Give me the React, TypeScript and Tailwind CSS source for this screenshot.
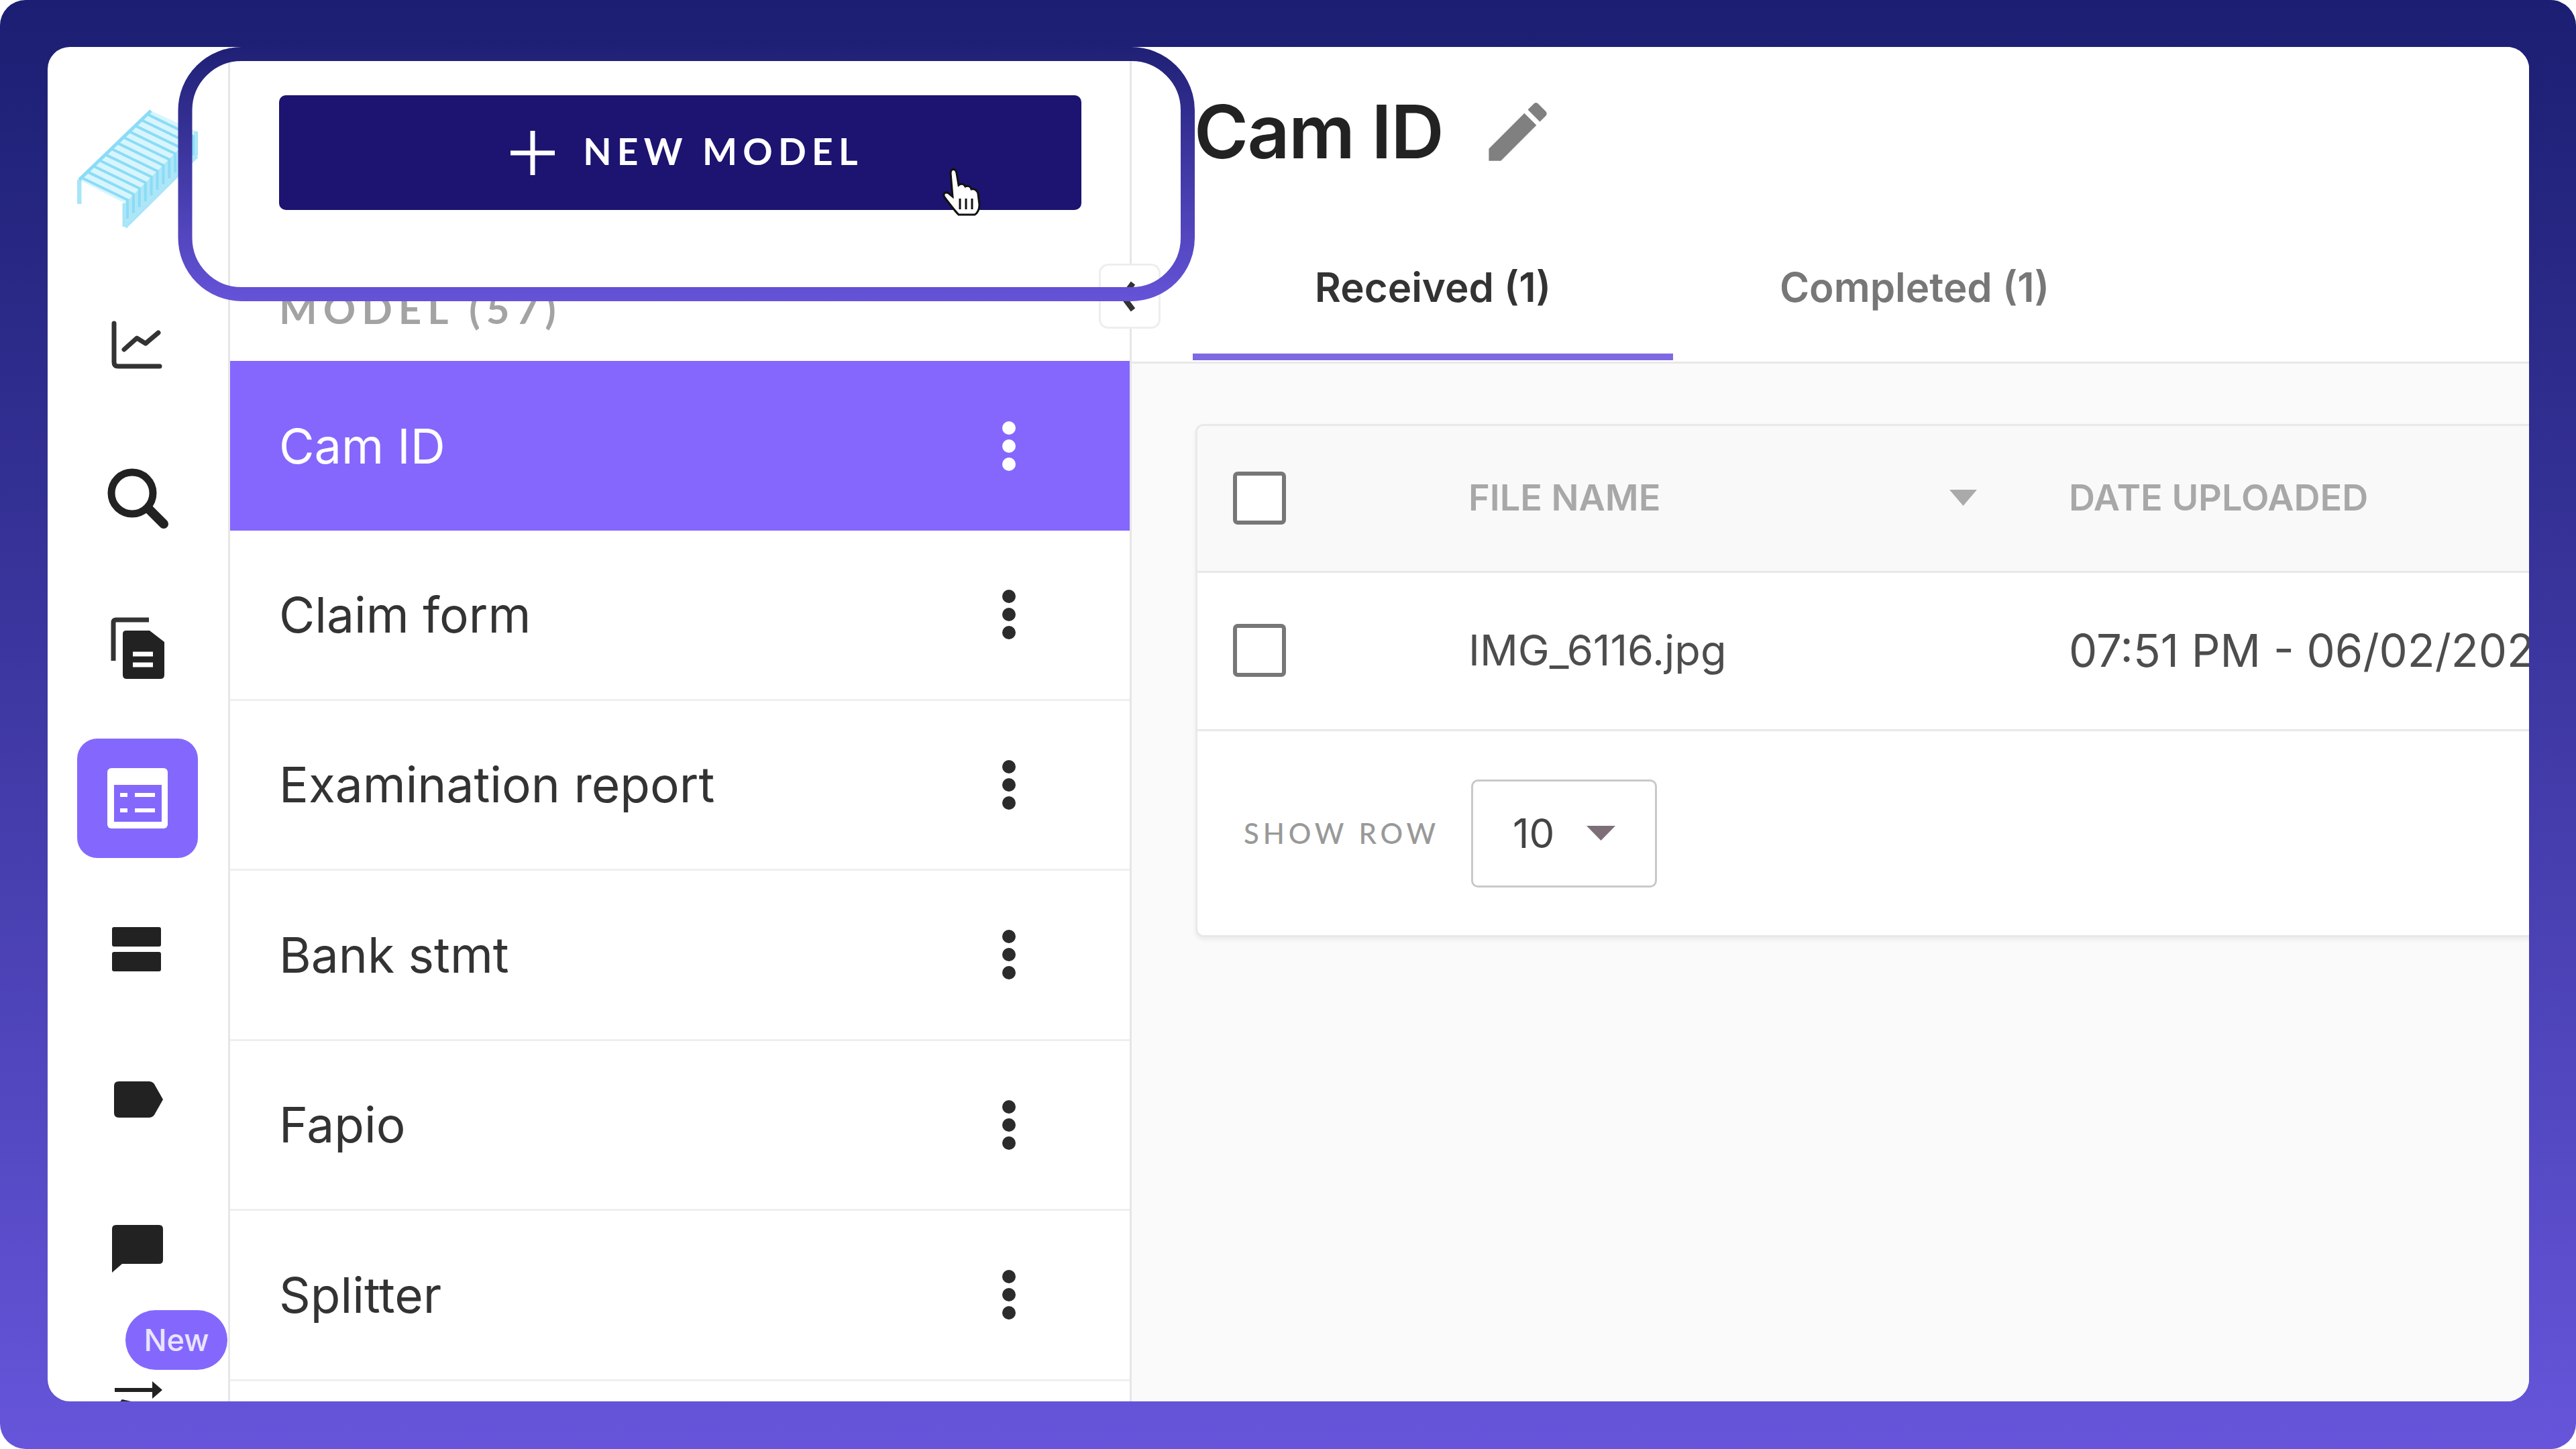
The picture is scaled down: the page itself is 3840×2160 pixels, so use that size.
const Kebab = ({ light }: { light?: boolean }) => (
  <div className="flex flex-col gap-[7px]">
    {[0, 1, 2].map((i) => (
      <span key={i} className={`w-[20px] h-[20px] rounded-full ${light ? "bg-white" : "bg-[#2b2b2b]"}`} />
    ))}
  </div>
);

const RailIcon = ({ cy, className, children }: { cy: number; className: string; children: React.ReactNode }) => (
  <svg viewBox={`115 ${cy - 90} 180 180`} className={`w-[180px] h-[180px] shrink-0 ${className}`}>
    {children}
  </svg>
);

const slats = Array.from({ length: 12 }, (_, i) => i);

const rows = ["Claim form", "Examination report", "Bank stmt", "Fapio", "Splitter"];

const Checkbox = () => <span className="w-[79px] h-[79px] border-[6px] border-[#777777] rounded-[7px] bg-white shrink-0" />;

export default function App() {
  return (
    <div className="relative w-[3840px] h-[2160px] bg-white overflow-hidden font-['Inter',sans-serif]">
      <div className="w-full h-full rounded-[38px] bg-gradient-to-b from-[#1b1e72] to-[#6655da] pt-[70px] pl-[71px] pr-[70px] pb-[71px]">
        <div className="relative flex w-full h-full rounded-[33px] bg-white overflow-hidden">
          {/* Rail */}
          <div className="relative w-[272px] h-full shrink-0 flex flex-col items-start pl-[44px] pt-[91px] border-r-[3px] border-[#e6e6e6] overflow-hidden">
            <RailIcon cy={251} className="">
              <g stroke="#8bdcf6" fill="none">
                <path d="M118 268 L225 165 L293 196 L186 303 Z" fill="#d8f5fd" stroke="none" />
                <path d="M118 268 V304 M186 303 V338 M293 196 V232 M186 338 L293 232" strokeWidth="7" opacity="0.75" />
                <path d="M186 303 L293 196 L293 232 L186 338 Z" fill="#aee6f8" stroke="none" />
                <path d="M118 268 L225 165" strokeWidth="5" />
                {slats.map((i) => (
                  <path key={i} d={`M${122 + i * 8.9} ${265 - i * 8.6} L${190 + i * 8.9} ${298 - i * 8.6} V${326 - i * 8.6}`} strokeWidth="4" />
                ))}
              </g>
            </RailIcon>
            <RailIcon cy={515} className="mt-[84px]">
              <g fill="none" stroke="#333333" strokeWidth="7" strokeLinecap="round" strokeLinejoin="round">
                <path d="M170 482 V540 Q170 546 176 546 H238" />
                <path d="M185 521 L204 504 L217 512 L236 496" />
              </g>
            </RailIcon>
            <RailIcon cy={743} className="mt-[48px]">
              <g fill="none" stroke="#222222" strokeLinecap="round">
                <circle cx="197" cy="735" r="31" strokeWidth="11" />
                <path d="M221 758 L244 781" strokeWidth="14" />
              </g>
            </RailIcon>
            <RailIcon cy={966} className="mt-[43px]">
              <path d="M169 985 V928 Q169 924 173 924 H222" fill="none" stroke="#333333" strokeWidth="7" />
              <path d="M188 940 H223 L245 957 V1006 Q245 1012 239 1012 H189 Q183 1012 183 1006 V945 Q183 940 188 940 Z" fill="#222222" />
              <path d="M198 975 H228 M198 991 H228" stroke="#ffffff" strokeWidth="7" />
            </RailIcon>
            <div className="mt-[45px] w-[180px] h-[178px] shrink-0 rounded-[30px] bg-[#8468fd] flex items-center justify-center">
              <svg viewBox="160 1146 90 90" className="w-[90px] h-[90px]">
                <rect x="160" y="1146" width="90" height="90" rx="6" fill="#ffffff" />
                <rect x="170" y="1171" width="71" height="55" fill="#8468fd" />
                <path d="M179 1186 H190 M179 1209 H190 M201 1186 H231 M201 1209 H231" stroke="#ffffff" strokeWidth="6" />
              </svg>
            </div>
            <RailIcon cy={1415} className="mt-[45px]">
              <rect x="167" y="1383" width="73" height="29" rx="3" fill="#222222" />
              <rect x="167" y="1420" width="73" height="29" rx="3" fill="#222222" />
            </RailIcon>
            <RailIcon cy={1639} className="mt-[44px]">
              <path d="M177 1613 H222 Q227 1613 230 1617 L243 1640 L230 1663 Q227 1667 222 1667 H177 Q170 1667 170 1660 V1620 Q170 1613 177 1613 Z" fill="#222222" />
            </RailIcon>
            <RailIcon cy={1862} className="mt-[43px]">
              <path d="M173 1827 H237 Q243 1827 243 1833 V1879 Q243 1885 237 1885 H182 L167 1898 V1833 Q167 1827 173 1827 Z" fill="#222222" />
            </RailIcon>
            <svg viewBox="115 1952 180 160" className="w-[180px] h-[160px] shrink-0">
              <path d="M171 2073 H228" stroke="#222222" strokeWidth="6" />
              <path d="M227 2060 L242 2073 L227 2086 Z" fill="#222222" />
              <path d="M182 2087 L170 2100 H240" fill="#222222" />
            </svg>
          </div>

          {/* Model list */}
          <div className="w-[1344px] h-full shrink-0 flex flex-col border-r-[3px] border-[#e6e6e6] overflow-hidden bg-white">
            <div className="h-[468px] shrink-0 pl-[73px] pt-[72px]">
              <button className="w-[1196px] h-[171px] rounded-[10px] bg-[#1c1470] text-white flex items-center justify-center gap-[42px] pl-[20px]">
                <svg viewBox="0 0 66 66" className="w-[66px] h-[66px]">
                  <path d="M33 0 V66 M0 33 H66" stroke="#ffffff" strokeWidth="7" />
                </svg>
                <span className="text-[55px] font-bold tracking-[0.15em] leading-none font-['Lato',sans-serif] pb-[4px]">NEW MODEL</span>
              </button>
              <div className="mt-[117px] text-[60px] font-bold tracking-[0.15em] leading-none text-[#a3a3a3] font-['Lato',sans-serif]">MODEL (57)</div>
            </div>
            <div className="h-[253px] shrink-0 bg-[#8567fd] flex items-center justify-between pl-[73px] pr-[170px] text-white text-[72px] leading-none">
              <span>Cam ID</span>
              <Kebab light />
            </div>
            {rows.map((r) => (
              <div key={r} className="h-[253.5px] shrink-0 flex items-center justify-between pl-[73px] pr-[170px] border-b-[3px] border-[#efefef] text-[#333333] text-[73px] leading-none">
                <span>{r}</span>
                <Kebab />
              </div>
            ))}
          </div>

          {/* Main */}
          <div className="flex-1 min-w-0 h-full flex flex-col bg-[#fafafa] overflow-hidden">
            <div className="h-[472px] shrink-0 bg-white border-b-[3px] border-[#e8e8e8] flex flex-col">
              <div className="mt-[71px] pl-[93px] flex items-center h-[110px]">
                <h1 className="text-[110px] font-semibold leading-none text-[#222222] tracking-[-0.015em]">Cam ID</h1>
                <svg viewBox="0 0 24 24" className="ml-[54px] w-[115px] h-[115px] fill-[#808080]">
                  <path d="M3 17.25V21h3.75L17.81 9.94l-3.75-3.75L3 17.25zM20.71 7.04c.39-.39.39-1.02 0-1.41l-2.34-2.34c-.39-.39-1.02-.39-1.41 0l-1.83 1.83 3.75 3.75 1.83-1.83z" />
                </svg>
              </div>
              <div className="mt-[69px] ml-[91px] flex h-[217px] text-[60px] font-semibold leading-none">
                <div className="w-[716px] h-full border-b-[10px] border-[#7f69e2] text-[#333333] flex items-center justify-center pt-[9px]">Received (1)</div>
                <div className="w-[720px] h-full border-b-[10px] border-transparent text-[#777777] flex items-center justify-center pt-[9px]">Completed (1)</div>
              </div>
            </div>
            <div className="mt-[90px] ml-[95px] w-[2400px] h-[765px] shrink-0 bg-white border-[3px] border-[#e9e9e9] rounded-[12px] shadow-[0_4px_6px_rgba(0,0,0,0.06)] flex flex-col">
              <div className="h-[219px] shrink-0 bg-[#f9f9f9] rounded-t-[10px] border-b-[3px] border-[#e8e8e8] flex items-center pl-[53px] text-[54px] font-semibold text-[#a8a8a8] leading-none pb-[2px]">
                <Checkbox />
                <span className="ml-[272px] w-[758px] flex items-center justify-between">
                  <span>FILE NAME</span>
                  <svg viewBox="0 0 41 24" className="w-[41px] h-[24px] fill-[#aaaaaa]"><path d="M0 0 H41 L20.5 24 Z" /></svg>
                </span>
                <span className="ml-[137px]">DATE UPLOADED</span>
              </div>
              <div className="h-[236px] shrink-0 border-b-[3px] border-[#e8e8e8] flex items-center pl-[53px] text-[#4d4d4d] leading-none whitespace-nowrap pb-[3px]">
                <Checkbox />
                <span className="ml-[272px] w-[717px] text-[63px]">IMG_6116.jpg</span>
                <span className="ml-[178px] text-[67px]">07:51 PM - 06/02/2023</span>
              </div>
              <div className="flex-1 flex items-center pl-[69px]">
                <span className="text-[42px] font-medium tracking-[0.14em] text-[#999999] leading-none font-['Lato',sans-serif] w-[339px] whitespace-nowrap">SHOW ROW</span>
                <div className="w-[277px] h-[161px] border-[3px] border-[#c9c9c9] rounded-[10px] flex items-center pl-[59px] text-[60px] text-[#444444] leading-none">
                  <span>10</span>
                  <svg viewBox="0 0 43 22" className="ml-[48px] w-[43px] h-[22px] fill-[#7d6f78]"><path d="M0 0 H43 L21.5 22 Z" /></svg>
                </div>
              </div>
            </div>
          </div>
        </div>
      </div>

      {/* Overlays */}
      <div className="absolute left-[1638px] top-[393px] w-[92px] h-[97px] rounded-[14px] bg-white border-[3px] border-[#eeeeee] flex items-center justify-center pr-[6px]">
        <svg viewBox="0 0 24 48" className="w-[24px] h-[48px]"><path d="M20 4 L5 24 L20 44" fill="none" stroke="#333333" strokeWidth="8" /></svg>
      </div>
      <svg viewBox="265 70 1517 379" className="absolute left-[265px] top-[70px] w-[1517px] h-[379px]">
        <defs>
          <linearGradient id="hl" gradientUnits="userSpaceOnUse" x1="0" y1="70" x2="0" y2="449">
            <stop offset="0" stopColor="#1f2075" />
            <stop offset="1" stopColor="#6553d8" />
          </linearGradient>
        </defs>
        <rect x="276" y="80.5" width="1494.5" height="358" rx="84" fill="none" stroke="url(#hl)" strokeWidth="21" />
      </svg>
      <svg viewBox="0 0 62 72" className="absolute left-[1403px] top-[250px] w-[62px] h-[72px]">
        <path d="M16 3 C20 1 22 4 23 8 L26 26 C30 23 34 24 36 28 C40 26 44 28 45 32 C50 31 54 34 55 39 L57 55 C57 62 54 68 50 70 H26 C22 66 14 56 5 44 C2 39 6 35 11 38 L17 43 L14 8 C14 6 15 4 16 3 Z" fill="#ffffff" stroke="#111111" strokeWidth="3" />
        <path d="M28 46 V62 M37 46 V62 M46 46 V62" stroke="#111111" strokeWidth="3" />
      </svg>
      <div className="absolute left-[187px] top-[1953px] w-[152px] h-[89px] rounded-full bg-[#8468fd] text-[#e9e4ff] text-[45px] font-medium leading-none flex items-center justify-center">New</div>
    </div>
  );
}
